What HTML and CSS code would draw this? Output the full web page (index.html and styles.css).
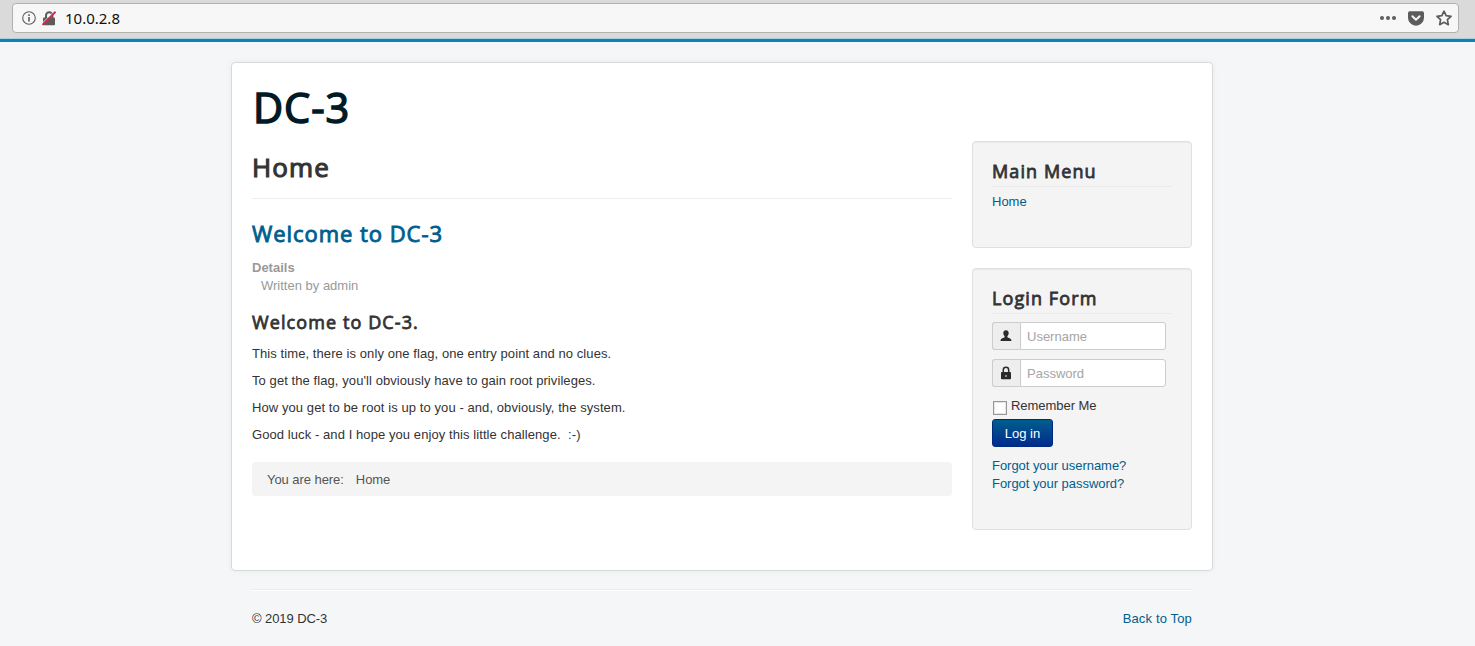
FILE: index.html
```html
<!DOCTYPE html>
<html lang="en">
<head>
<meta charset="utf-8">
<title>Home</title>
<link rel="stylesheet" href="styles.css">
</head>
<body>
<div class="toolbar">
  <div class="urlbar">
    <svg class="ic-info" width="14" height="14" viewBox="0 0 14 14"><circle cx="7" cy="7" r="6.3" fill="none" stroke="#5c5c5c" stroke-width="1.1"/><rect x="6.2" y="6" width="1.6" height="4.6" fill="#5c5c5c"/><rect x="6.2" y="3.3" width="1.6" height="1.7" fill="#5c5c5c"/></svg>
    <svg class="ic-lock" width="14" height="15" viewBox="0 0 14 15"><path d="M4 7V4.500a3.200 3.200 0 0 1 6.400 0V7" fill="none" stroke="#5c5c5c" stroke-width="2"/><rect x="1" y="6.500" width="12" height="7.800" rx="1" fill="#5c5c5c"/><path d="M0 12.600 12.200.4" stroke="#f7f7f7" stroke-width="1"/><path d="M.5 13.900 13.600.800" stroke="#d7264f" stroke-width="2"/></svg>
    <span class="address">10.0.2.8</span>
    <svg class="ic-dots" width="16" height="4" viewBox="0 0 16 4"><g fill="#5c5c5c"><circle cx="2" cy="2" r="2"/><circle cx="8" cy="2" r="2"/><circle cx="14" cy="2" r="2"/></g></svg>
    <svg class="ic-pocket" width="16" height="15" viewBox="0 0 16 15"><path d="M1.800.3h12.400A1.700 1.700 0 0 1 16 2v4.700a8 8 0 0 1-16 0V2A1.700 1.700 0 0 1 1.800.3z" fill="#5c5c5c"/><path d="M4.400 5.300 8 8.700l3.600-3.400" fill="none" stroke="#f7f7f7" stroke-width="2" stroke-linecap="round" stroke-linejoin="round"/></svg>
    <svg class="ic-star" width="16" height="16" viewBox="0 0 16 16"><path d="M8 1.200 10.100 5.700 15 6.300 11.400 9.700 12.300 14.700 8 12.300 3.700 14.700 4.600 9.700 1 6.300 5.900 5.700z" fill="none" stroke="#5c5c5c" stroke-width="1.700" stroke-linejoin="round"/></svg>
  </div>
</div>
<div class="page">
  <div class="container">
    <header class="brand">DC-3</header>
    <div class="columns">
      <main class="content">
        <h1 class="page-title">Home</h1>
        <h2 class="article-title"><a>Welcome to DC-3</a></h2>
        <dl class="info"><dt>Details</dt><dd>Written by admin</dd></dl>
        <h3 class="subtitle">Welcome to DC-3.</h3>
        <p>This time, there is only one flag, one entry point and no clues.</p>
        <p>To get the flag, you'll obviously have to gain root privileges.</p>
        <p>How you get to be root is up to you - and, obviously, the system.</p>
        <p>Good luck - and I hope you enjoy this little challenge.&nbsp; :-)</p>
        <div class="breadcrumb"><span>You are here:</span><span>Home</span></div>
      </main>
      <aside class="sidebar">
        <section class="well well-menu">
          <h3>Main Menu</h3>
          <a>Home</a>
        </section>
        <section class="well well-login">
          <h3>Login Form</h3>
          <div class="field"><span class="addon"><svg width="12" height="12" viewBox="0 0 12 12"><path d="M6 .3c1.700 0 2.700 1.100 2.700 2.800 0 1.300-.6 2.500-1.300 3.100v1.100c.8.700 4.100 1 4.100 3.700H.5c0-2.700 3.300-3 4.100-3.700V6.200C3.900 5.600 3.300 4.400 3.300 3.100 3.300 1.400 4.300.3 6 .3z" fill="#2b2b2b"/></svg></span><input type="text" placeholder="Username"></div>
          <div class="field"><span class="addon"><svg width="12" height="14" viewBox="0 0 12 14"><path d="M3.300 7V3.900a2.700 2.700 0 0 1 5.400 0V7" fill="none" stroke="#2b2b2b" stroke-width="1.500"/><rect x="1" y="6" width="10" height="7.300" rx=".8" fill="#2b2b2b"/><rect x="5.500" y="9" width="1" height="2" fill="#eee"/></svg></span><input type="text" placeholder="Password"></div>
          <label class="remember"><input type="checkbox">Remember Me</label>
          <button class="btn">Log in</button>
          <div class="links"><a>Forgot your username?</a><a>Forgot your password?</a></div>
        </section>
      </aside>
    </div>
  </div>
  <footer class="footer"><span>© 2019 DC-3</span><a>Back to Top</a></footer>
</div>
</body>
</html>
```
FILE: styles.css
```css
* { box-sizing: border-box; }
body {
  margin: 0;
  height: 646px;
  overflow: hidden;
  background: #f4f6f7;
  color: #333;
  font: 13px/18px "Liberation Sans", Arial, sans-serif;
}
h1, h2, h3, p, dl, dd { margin: 0; }
a { color: #005e8d; }
.toolbar {
  height: 39px;
  padding: 3px 16px 0 12px;
  border-bottom: 1px solid #a9cfe0;
  background: #dadada;
}
.urlbar {
  display: flex;
  align-items: center;
  height: 30px;
  padding: 0 6px 0 9px;
  border: 1px solid #b0b0b0;
  border-radius: 4px;
  background: #f7f7f7;
}
.ic-lock { margin-left: 6px; }
.address {
  margin-left: 9px;
  color: #111;
  font: 15px/28px "Noto Sans", sans-serif;
}
.ic-dots { margin-left: auto; }
.ic-pocket, .ic-star { margin-left: 12px; }
.page {
  height: 607px;
  padding-top: 20px;
  border-top: 3px solid #0d82b8;
}
.container {
  width: 982px;
  height: 509px;
  margin-left: 231px;
  padding: 20px;
  border: 1px solid #d6dadb;
  border-radius: 4px;
  background: #fff;
  box-shadow: 0 0 6px rgba(0, 0, 0, .05);
}
.brand, h1, h2, h3 {
  font-family: "Open Sans", sans-serif;
  font-weight: 400;
  -webkit-text-stroke: .8px currentColor;
}
.brand {
  height: 58px;
  padding-left: 1px;
  color: #001a27;
  font-size: 41.500px;
  line-height: 48px;
  letter-spacing: 1px;
  -webkit-text-stroke-width: 1.5px;
}
.columns {
  display: grid;
  grid-template-columns: 700px 220px;
  gap: 20px;
}
.content { padding-top: 8px; }
.page-title {
  height: 50px;
  border-bottom: 1px solid #eee;
  font-size: 26px;
  line-height: 36px;
  letter-spacing: 1.1px;
  -webkit-text-stroke-width: 1.1px;
}
.article-title {
  margin-top: 16px;
  font-size: 22px;
  line-height: 36px;
  letter-spacing: .95px;
  -webkit-text-stroke-width: .9px;
}
.info { margin-top: 8px; color: #999; }
.info dt { font-weight: 700; }
.info dd { margin-left: 9px; }
.subtitle, .well h3 {
  font-size: 18px;
  line-height: 20px;
  letter-spacing: 1.1px;
}
.subtitle { margin: 17px 0 13px; }
.content p { margin-bottom: 9px; letter-spacing: .08px; }
.breadcrumb {
  display: flex;
  gap: 12px;
  height: 34px;
  margin-top: 18px;
  padding: 9px 15px 7px;
  border-radius: 4px;
  background: #f4f4f4;
  color: #555;
  letter-spacing: -.06px;
}
.well {
  padding: 19px;
  border: 1px solid #e0e0e0;
  border-radius: 4px;
  background: #f4f4f4;
  box-shadow: inset 0 1px 1px rgba(0, 0, 0, .05);
}
.well h3 {
  height: 26px;
  margin-bottom: 6px;
  border-bottom: 1px solid #eaeaea;
}
.well-menu { height: 107px; margin-bottom: 20px; }
.well-login { height: 262px; letter-spacing: -.04px; }
.field { display: flex; width: 174px; height: 28px; margin: 8px 0 9px; }
.field + .field { margin-top: 0; }
.addon {
  display: flex;
  align-items: center;
  justify-content: center;
  width: 28px;
  padding-right: 2px;
  border: 1px solid #ccc;
  border-right: 0;
  border-radius: 3px 0 0 3px;
  background: #eee;
}
.field input {
  width: 146px;
  padding: 2px 6px 0;
  border: 1px solid #ccc;
  border-radius: 0 3px 3px 0;
  background: #fff;
  font: inherit;
}
.field input::placeholder { color: #a5a5a5; }
.remember { display: flex; height: 23px; line-height: 20px; }
.remember input {
  width: 14px;
  height: 14px;
  margin: 5px 4px 0 1px;
  appearance: none;
  border: 1px solid #999;
  background: #fff;
  box-shadow: inset 0 0 0 1px #e4e4e4;
}
.btn {
  display: block;
  width: 61px;
  height: 28px;
  padding: 2px 0 0;
  border: 1px solid #002a80;
  border-radius: 3px;
  background: linear-gradient(#005e8d, #002b8d);
  color: #fff;
  font: inherit;
}
.links { display: flex; flex-direction: column; margin-top: 10px; }
.footer {
  display: flex;
  justify-content: space-between;
  width: 940px;
  margin: 18px 0 0 252px;
  padding-top: 20px;
  border-top: 1px solid #e9ebec;
  box-shadow: inset 0 1px #fff;
}
.footer span { letter-spacing: -.08px; }
.footer a { letter-spacing: .15px; }
```
